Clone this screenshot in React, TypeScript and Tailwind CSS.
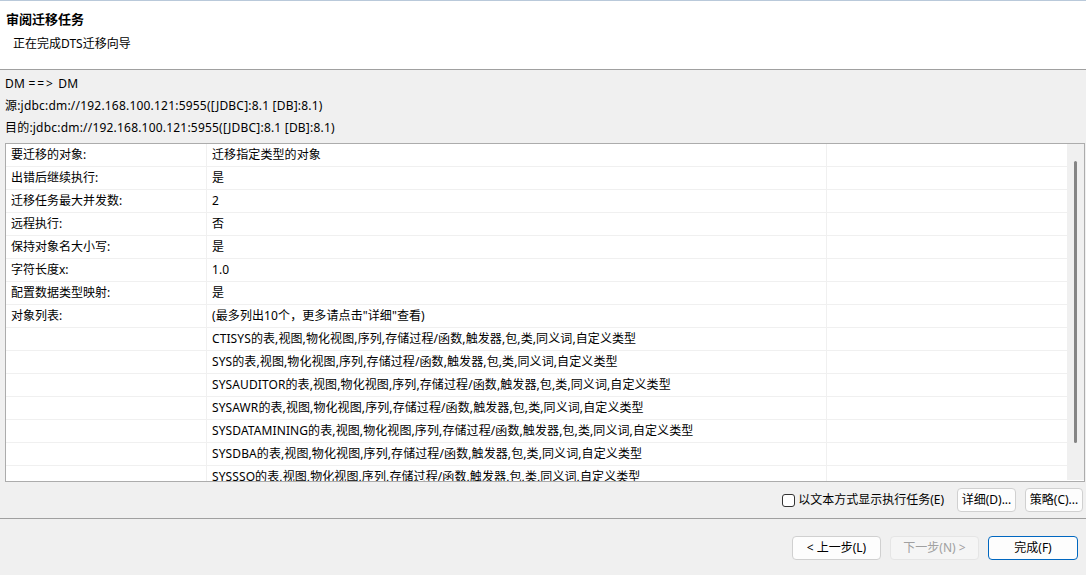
import React from "react";

const props: [string, string][] = [
  ["要迁移的对象:", "迁移指定类型的对象"],
  ["出错后继续执行:", "是"],
  ["迁移任务最大并发数:", "2"],
  ["远程执行:", "否"],
  ["保持对象名大小写:", "是"],
  ["字符长度x:", "1.0"],
  ["配置数据类型映射:", "是"],
  ["对象列表:", "(最多列出10个，更多请点击\"详细\"查看)"],
];

const suffix = "的表,视图,物化视图,序列,存储过程/函数,触发器,包,类,同义词,自定义类型";
const schemas = ["CTISYS", "SYS", "SYSAUDITOR", "SYSAWR", "SYSDATAMINING", "SYSDBA", "SYSSSO"];

function Row({ a, b }: { a: string; b: string }) {
  return (
    <div className="flex h-[23px] border-b border-[#f0f0f0] shrink-0">
      <div className="w-[201px] border-r border-[#f0f0f0] pl-[5px] leading-[22px] whitespace-nowrap">{a}</div>
      <div className="w-[620px] border-r border-[#f0f0f0] pl-[5px] leading-[22px] whitespace-nowrap tracking-[0.1px]">{b}</div>
      <div className="flex-1" />
    </div>
  );
}

export default function App() {
  return (
    <div
      className="w-[1086px] h-[575px] bg-[#f0f0f0] flex flex-col overflow-hidden text-[12px] text-[#000]"
      style={{ fontFamily: '"Noto Sans", "Noto Sans CJK SC", sans-serif' }}
    >
      <div className="h-px bg-[#b9c9da] shrink-0" />
      <div className="h-[69px] bg-white border-b border-[#a0a0a0] shrink-0 flex flex-col">
        <div className="pl-[6px] pt-[10px] h-[26px] leading-[16px] text-[13px] font-bold">审阅迁移任务</div>
        <div className="pl-[13px] pt-[9px] leading-[16px] text-[12px]">正在完成DTS迁移向导</div>
      </div>
      <div className="pl-[5px] pt-[3px] leading-[22px] shrink-0 tracking-[0.2px]">
        <div className="whitespace-pre">DM <span className="tracking-[2px]">==&gt;</span> DM</div>
        <div>源:jdbc:dm://192.168.100.121:5955([JDBC]:8.1 [DB]:8.1)</div>
        <div>目的:jdbc:dm://192.168.100.121:5955([JDBC]:8.1 [DB]:8.1)</div>
      </div>
      <div className="mt-[4px] ml-[5px] mr-[1px] h-[339px] border border-[#acacac] bg-white flex shrink-0 overflow-hidden">
        <div className="flex-1 flex flex-col overflow-hidden">
          {props.map(([a, b]) => (
            <Row key={a} a={a} b={b} />
          ))}
          {schemas.map((s) => (
            <Row key={s} a="" b={s + suffix} />
          ))}
        </div>
        <div className="w-[17px] bg-[#f0f0f0] shrink-0 flex justify-center mb-[1px]">
          <div className="w-[3px] mt-[17px] h-[282px] bg-[#858585] rounded-full" />
        </div>
      </div>
      <div className="h-[37px] border-b border-[#a0a0a0] shrink-0 flex items-center justify-end pr-[3px]">
        <label className="flex items-center mr-[13px]">
          <span className="w-[13px] h-[13px] border border-[#333] rounded-[3px] bg-white mr-[3px]" />
          <span>以文本方式显示执行任务(E)</span>
        </label>
        <button className="w-[59px] h-[24px] bg-[#fdfdfd] border border-[#d0d0d0] rounded-[4px] mr-[9px]">详细(D)...</button>
        <button className="w-[58px] h-[24px] bg-[#fdfdfd] border border-[#d0d0d0] rounded-[4px]">策略(C)...</button>
      </div>
      <div className="flex justify-end pt-[17px] pr-[8px] gap-[9px]">
        <button className="w-[89px] h-[24px] bg-[#fdfdfd] border border-[#d0d0d0] rounded-[4px]">&lt; 上一步(L)</button>
        <button className="w-[89px] h-[24px] bg-[#f5f5f5] border border-[#e5e5e5] rounded-[4px] text-[#a0a0a0]">下一步(N) &gt;</button>
        <button className="w-[90px] h-[24px] bg-[#fdfdfd] border border-[#0067c0] rounded-[4px]">完成(F)</button>
      </div>
    </div>
  );
}
